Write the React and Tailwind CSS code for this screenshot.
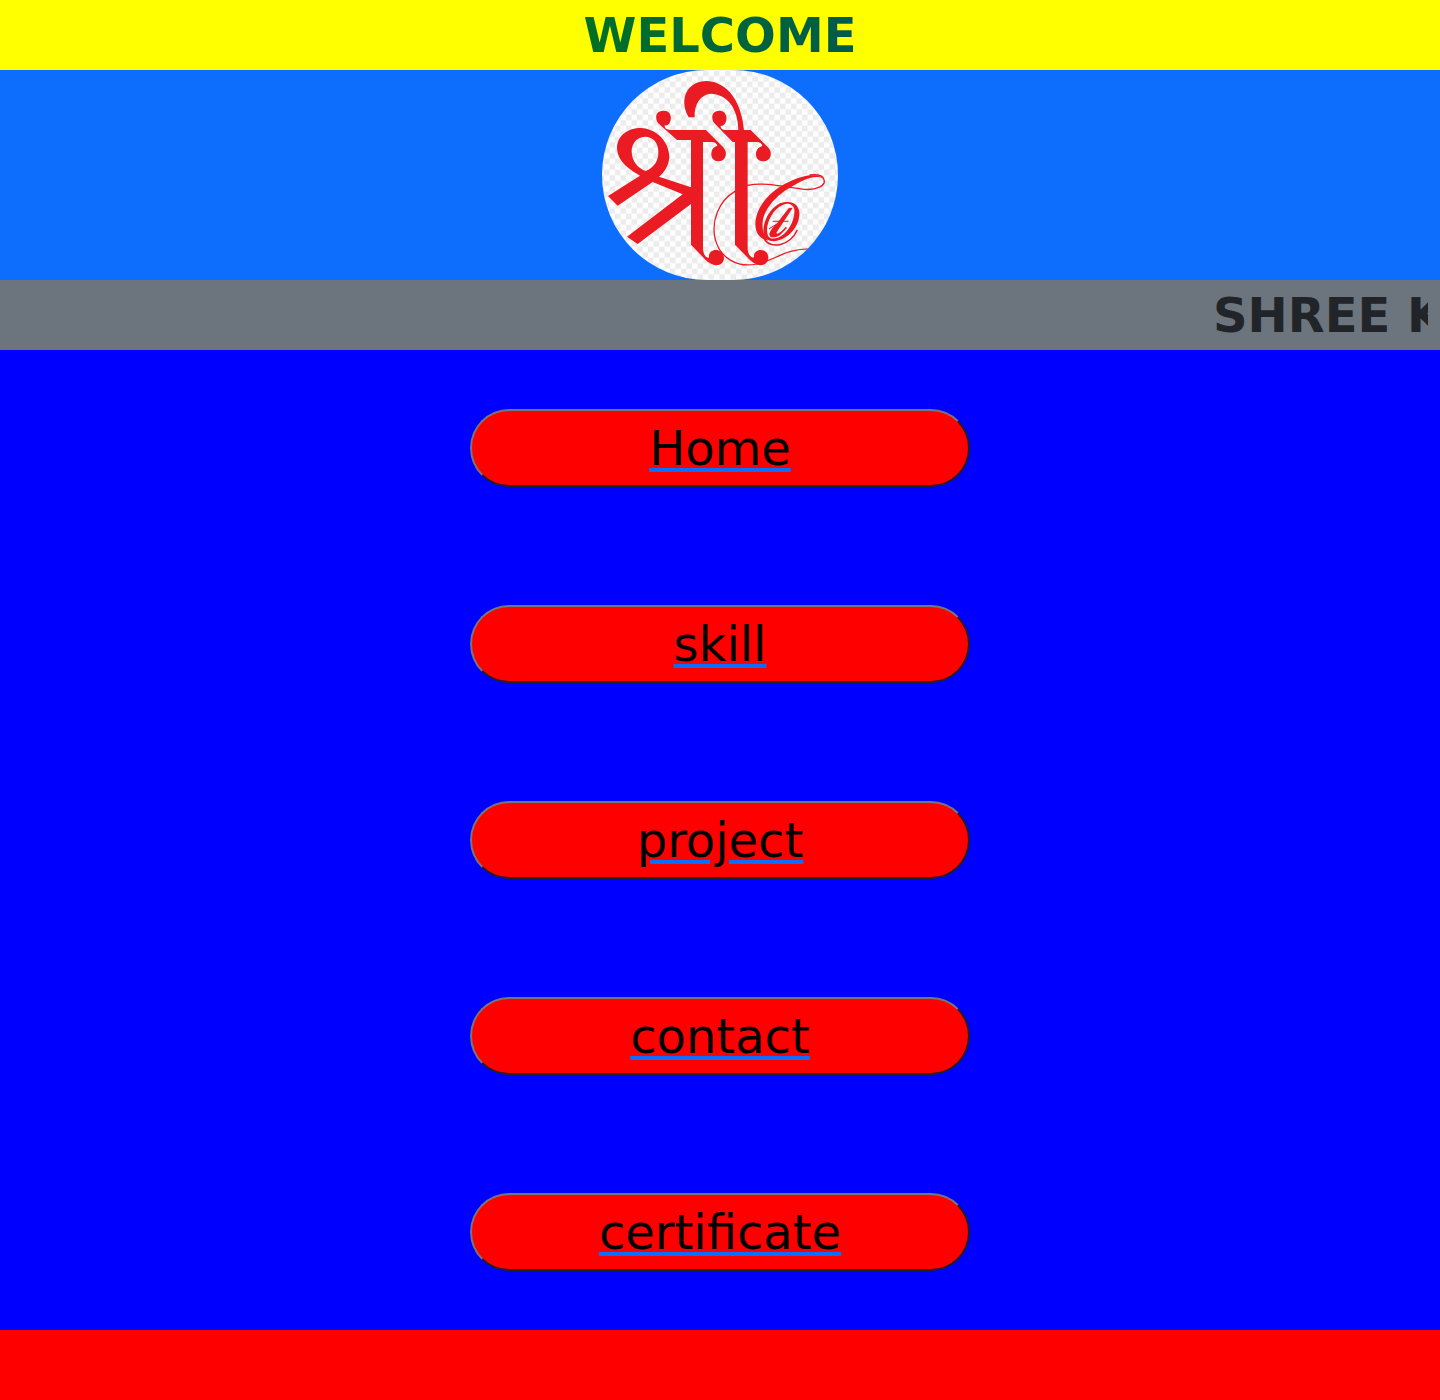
const RED = '#eb1b23';

function Emblem() {
  return (
    <svg viewBox="6 6 708 630" className="h-[210px] w-[236px] rounded-[105px]" aria-label="Shree">
      <defs>
        <pattern id="checks" x="12" y="8" width="33" height="33" patternUnits="userSpaceOnUse">
          <rect width="33" height="33" fill="#fefefe" />
          <rect width="16.5" height="16.5" fill="#ececec" />
          <rect x="16.5" y="16.5" width="16.5" height="16.5" fill="#ececec" />
        </pattern>
      </defs>
      <rect width="720" height="642" fill="url(#checks)" />
      <g fill={RED}>
        <path d="M266 148C235 92 262 39 321 39C386 42 426 107 432 187H415C415 122 382 78 331 77C303 80 282 107 284 148Z" />
        <path
          fillRule="evenodd"
          d="M24 384L120 323C85 303 51 279 51 238C53 202 84 180 123 180C170 182 208 222 208 267C207 291 193 314 177 326L273 358V408L113 528L81 506L248 379L158 342L53 413ZM137 309C165 297 176 275 175 251C175 225 160 206 135 206C108 207 94 229 95 252C96 280 113 300 137 309Z"
        />
        <path d="M231 216L177 168C165 157 163 129 189 128C207 127 214 139 212 154C211 166 204 174 194 172C193 180 200 186 212 186H318L369 237C384 251 380 280 355 280C341 280 333 270 334 256C335 244 342 235 352 234C351 226 344 222 335 222H309V545C312 563 320 571 327 569C325 555 335 546 347 546C363 546 372 557 372 570C372 586 356 596 341 590C332 588 325 584 317 576L273 530V216Z" />
        <path d="M398 222L346 169C333 158 331 129 357 128C372 127 381 139 379 154C378 166 372 174 362 174C361 181 368 186 376 186H452L503 237C519 251 515 280 489 280C475 280 467 270 468 256C469 244 477 237 487 234C486 226 479 222 470 222H443V545C446 562 454 571 462 568C460 555 470 546 482 546C497 546 505 557 505 570C505 586 488 596 474 590C465 588 458 583 449 575L405 530V222Z" />
        <path d="M673 335C665 322 640 318 608 326C537 344 466 402 466 470C467 496 480 513 505 518C491 502 486 486 488 462C492 422 532 380 572 358C608 335 642 320 668 330Z" />
        <path
          fillRule="evenodd"
          d="M540 406C574 394 601 408 598 442C595 486 551 524 514 519C488 515 484 487 498 453C507 432 522 415 540 406ZM548 411C514 425 493 478 504 503C511 516 530 514 548 501C572 483 585 448 583 426C581 409 564 403 548 411Z"
        />
        <path d="M567 419L578 420L530 493C528 499 534 499 546 488L558 476L561 480L541 500C526 511 507 511 508 498C510 488 521 476 531 466Z" />
      </g>
      <g fill="none" stroke={RED} strokeLinecap="round">
        <path strokeWidth="3.8" d="M405 370C357 398 332 459 346 515C361 571 413 600 470 588C521 580 554 540 637 543" />
        <path strokeWidth="4" d="M443 352C494 341 553 357 612 364C650 367 678 353 672 335C668 321 648 319 630 321" />
        <path strokeWidth="4.5" d="M488 505C511 552 573 529 591 487" />
        <path strokeWidth="3" d="M519 460H564M508 482L531 468" />
      </g>
    </svg>
  );
}

const LINKS = ['Home', 'skill', 'project', 'contact', 'certificate'];

export default function App() {
  return (
    <div className="flex min-h-screen flex-col bg-[#0000ff] font-['DejaVu_Sans',sans-serif] text-5xl">
      <h1 className="flex h-[70px] items-center justify-center bg-[#ffff00] font-bold">
        <span className="bg-linear-to-r from-[#007020] to-[#005a4c] bg-clip-text leading-[70px] text-transparent">WELCOME</span>
      </h1>
      <div className="flex h-[210px] justify-center bg-[#0d6efd]">
        <Emblem />
      </div>
      <div className="h-[70px] bg-[#6c757d] px-3">
        <div className="overflow-hidden pl-[1201px] leading-[70px] font-bold whitespace-nowrap text-[#212529]">SHREE K</div>
      </div>
      <nav className="flex flex-1 flex-col items-center gap-[118px] pt-[59px]">
        {LINKS.map((label) => (
          <button
            key={label}
            className="h-[78px] w-[500px] rounded-full border-2 border-t-[#767676] border-r-[#212121] border-b-[#212121] border-l-[#767676] bg-[#ff0000] leading-[72px] text-black"
          >
            <a className="underline decoration-[#0d6efd]">{label}</a>
          </button>
        ))}
      </nav>
      <footer className="h-[70px] bg-[#ff0000]" />
    </div>
  );
}
